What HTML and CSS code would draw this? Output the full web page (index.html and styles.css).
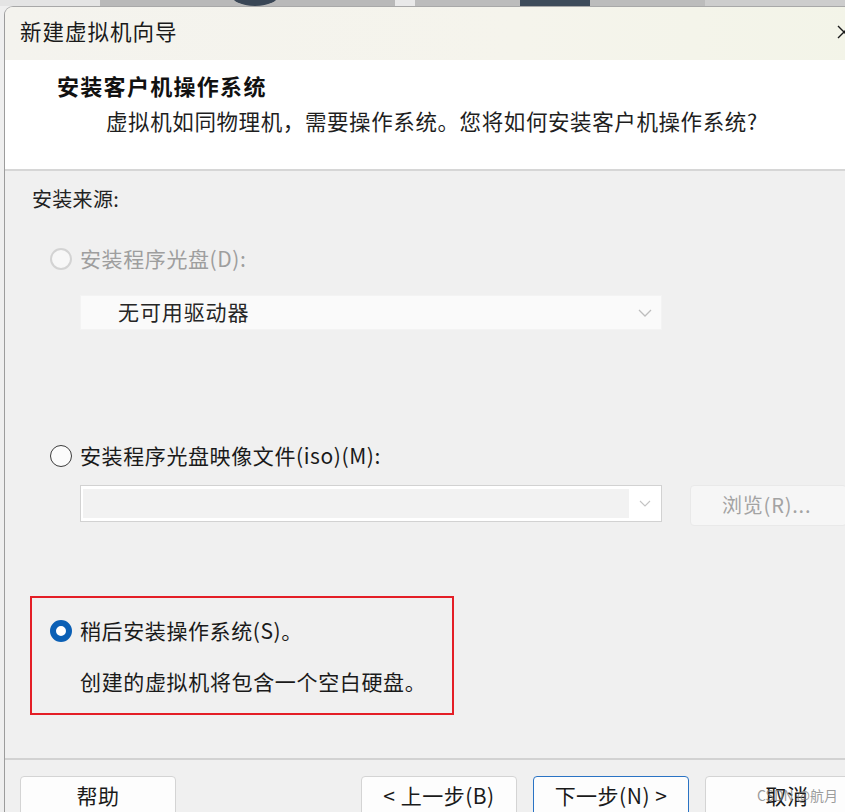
FILE: index.html
```html
<!DOCTYPE html>
<html lang="zh-CN">
<head>
<meta charset="utf-8">
<title>新建虚拟机向导</title>
<link rel="stylesheet" href="styles.css">
</head>
<body>
<div class="screen">
  <div class="backdrop">
    <span class="bd bd-a"></span>
    <span class="bd bd-b"><span class="bd-dot"></span></span>
    <span class="bd bd-c"></span>
    <span class="bd bd-d"><span class="bd-block"></span></span>
    <span class="bd bd-e"></span>
  </div>
  <div class="dialog">
    <div class="titlebar">
      <span class="title">新建虚拟机向导</span>
      <svg class="close" width="14" height="14" viewBox="0 0 14 14"><path d="M1 1L13 13M13 1L1 13" stroke="#1a1a1a" stroke-width="1.4" fill="none"/></svg>
    </div>
    <div class="header">
      <div class="heading">安装客户机操作系统</div>
      <div class="subtitle">虚拟机如同物理机，需要操作系统。您将如何安装客户机操作系统?</div>
    </div>
    <div class="content">
      <div class="section-label">安装来源:</div>

      <div class="radio-row disabled row-disc">
        <span class="radio radio-disabled"></span>
        <span class="radio-text">安装程序光盘(D):</span>
      </div>
      <div class="select select-disc">
        <span class="select-text">无可用驱动器</span>
        <svg class="chev" width="14" height="8" viewBox="0 0 14 8"><path d="M1 1L7 7L13 1" stroke="#bdbdbd" stroke-width="1.3" fill="none"/></svg>
      </div>

      <div class="radio-row row-iso">
        <span class="radio radio-off"></span>
        <span class="radio-text">安装程序光盘映像文件(iso)(M):</span>
      </div>
      <div class="iso-row">
        <div class="combo">
          <div class="combo-field"></div>
          <svg class="chev-small" width="12" height="7" viewBox="0 0 12 7"><path d="M1 1L6 6L11 1" stroke="#c4c4c4" stroke-width="1.1" fill="none"/></svg>
        </div>
        <div class="browse">浏览(R)...</div>
      </div>

      <div class="highlight">
        <div class="radio-row">
          <span class="radio radio-on"></span>
          <span class="radio-text">稍后安装操作系统(S)。</span>
        </div>
        <div class="note">创建的虚拟机将包含一个空白硬盘。</div>
      </div>
    </div>
    <div class="footer">
      <div class="btn btn-help">帮助</div>
      <div class="btn btn-prev">&lt; 上一步(B)</div>
      <div class="btn btn-next">下一步(N) &gt;</div>
      <div class="btn btn-cancel">取消<span class="watermark">CSDN @航月</span></div>
    </div>
  </div>
</div>
</body>
</html>
```

FILE: styles.css
```css
* { box-sizing: border-box; }
html, body { margin: 0; padding: 0; }
body {
  width: 845px;
  height: 812px;
  overflow: hidden;
  background: #efefef;
  font-family: "Noto Sans CJK SC", "Noto Sans", sans-serif;
  color: #1a1a1a;
}
.screen { width: 845px; height: 812px; overflow: hidden; position: relative; }

.backdrop { height: 6px; display: flex; }
.bd { display: block; height: 6px; position: relative; overflow: hidden; }
.bd-a { width: 100px; background: #e4e4e4; }
.bd-b { width: 295px; background: #b9b9b9; }
.bd-dot { position: absolute; left: 130px; top: -20px; width: 50px; height: 26px; border-radius: 50%; background: #3a4756; }
.bd-c { width: 20px; background: #e9e9e9; }
.bd-d { width: 290px; background: #bcbcbc; }
.bd-block { position: absolute; left: 105px; top: 0; width: 70px; height: 6px; background: #3d4b5a; }
.bd-e { flex: 1; background: #cdcdcd; }

.dialog {
  margin-left: 4px;
  width: 860px;
  border-left: 1px solid #9c9c9c;
  border-top: 1px solid #a8a8a8;
  border-top-left-radius: 9px;
  overflow: hidden;
  background: #f0f0f0;
}

.titlebar {
  height: 53px;
  background: linear-gradient(90deg, #f4f3ee 0%, #f5f4ec 60%, #f3f4e8 100%);
  display: flex;
  align-items: center;
  padding-left: 15px;
  padding-right: 13px;
  justify-content: space-between;
}
.title { font-size: 21.5px; line-height: 30px; color: #1a1a1a; margin-top: -6px; letter-spacing: 1px; }
.close { margin-top: -4px; }

.header {
  background: #ffffff;
  height: 111px;
  padding: 10px 0 0 52px;
  border-bottom: 2px solid #d6d6d6;
}
.heading { font-size: 22px; font-weight: 700; line-height: 30px; color: #111; letter-spacing: 1.3px; }
.subtitle { font-size: 21.5px; line-height: 30px; margin-top: 6px; padding-left: 49px; color: #1e1e1e; letter-spacing: 0.6px; }

.content { padding: 13px 0 0 27px; height: 587px; }
.section-label { font-size: 20px; line-height: 30px; color: #222; letter-spacing: 0.3px; }

.radio-row { display: flex; align-items: center; height: 30px; margin-left: 18px; gap: 8px; }
.radio-text { font-size: 21px; line-height: 30px; color: #1a1a1a; letter-spacing: 0.6px; margin-top: -3px; }
.row-disc { margin-top: 30px; }
.disabled .radio-text { color: #9e9e9e; }

.radio { width: 22px; height: 22px; border-radius: 50%; flex: none; display: block; }
.radio-disabled { border: 2px solid #d3d3d3; background: #f7f7f7; }
.radio-off { border: 1.5px solid #3c3c3c; background: #fbfbfb; }
.radio-on { border: 6.5px solid #0a5fb5; background: #ffffff; }

.select {
  margin-left: 48px;
  margin-top: 21px;
  width: 582px;
  height: 35px;
  background: #fafafa;
  border: 1px solid #f3f3f3;
  display: flex;
  align-items: center;
  justify-content: space-between;
  padding: 0 9px 0 37px;
}
.select-text { font-size: 21px; line-height: 30px; color: #262626; letter-spacing: 0.9px; margin-top: -3px; }

.row-iso { margin-top: 111px; }

.iso-row { display: flex; align-items: flex-start; margin-left: 48px; margin-top: 14px; gap: 28px; }
.combo {
  width: 582px;
  height: 37px;
  border: 1px solid #d2d2d2;
  background: #ffffff;
  display: flex;
  align-items: center;
  padding: 3px 0 3px 2px;
}
.combo-field { width: 546px; height: 29px; background: #f2f2f2; }
.chev-small { margin-left: 10px; }
.browse {
  width: 157px;
  height: 41px;
  background: #f6f6f6;
  border: 1px solid #e9e9e9;
  border-radius: 4px;
  font-size: 20px;
  line-height: 37px;
  color: #a3a3a3;
  padding-left: 31px;
  letter-spacing: 0.8px;
}

.highlight {
  margin-left: -2px;
  margin-top: 70px;
  width: 424px;
  height: 119px;
  border: 2px solid #e41e26;
  padding-top: 18px;
}
.note { font-size: 21px; line-height: 30px; margin-left: 48px; margin-top: 20px; color: #1a1a1a; letter-spacing: 0.65px; }

.footer {
  border-top: 2px solid #d2d2d2;
  padding: 16px 0 0 15px;
  display: flex;
  gap: 16px;
  height: 60px;
}
.btn {
  flex: none;
  width: 156px;
  height: 44px;
  background: #fdfdfd;
  border: 1px solid #d4d4d4;
  border-radius: 4px;
  font-size: 21px;
  line-height: 37px;
  text-align: center;
  color: #1a1a1a;
  position: relative;
  letter-spacing: 0.5px;
}
.btn-prev { margin-left: 169px; }
.btn-next { border: 1px solid #2a73c4; }
.btn-cancel { padding-left: 8px; }
.watermark {
  position: absolute;
  left: 51px;
  top: 0;
  font-size: 14px;
  line-height: 37px;
  letter-spacing: 0;
  color: rgba(130, 130, 130, 0.8);
  white-space: nowrap;
}
```
